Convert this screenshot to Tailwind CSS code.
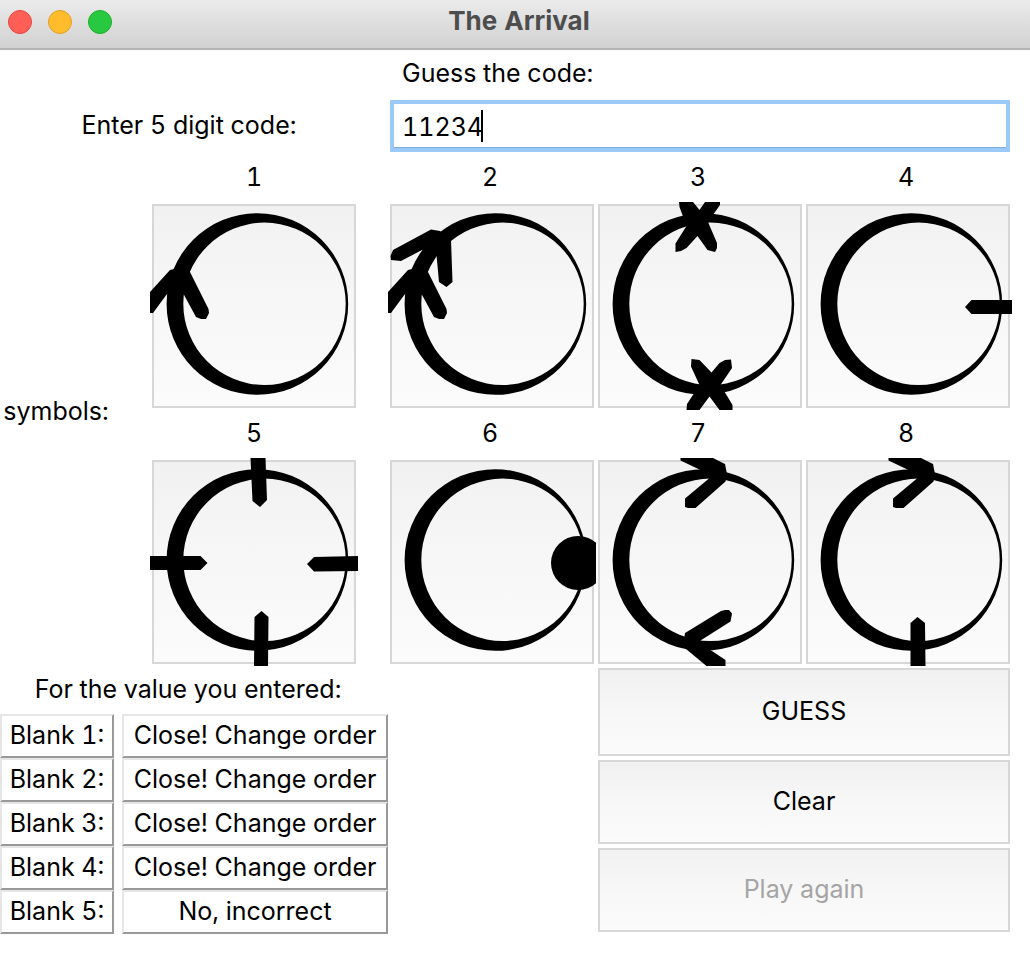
<!DOCTYPE html>
<html lang="en">
<head>
<meta charset="utf-8">
<title>The Arrival</title>
<script src="https://cdn.jsdelivr.net/npm/@tailwindcss/browser@4"></script>
</head>
<body class="bg-white text-black font-['Inter','Liberation_Sans',sans-serif] text-[25px] leading-8 tabular-nums">

<svg class="hidden" aria-hidden="true">
  <defs>
    <path id="ring" fill-rule="evenodd" d="M16.6 102a90.8 90.8 0 1 1 181.6 0a90.8 90.8 0 1 1 -181.6 0ZM33.3 101.8a81.2 81.2 0 1 0 162.4 0a81.2 81.2 0 1 0 -162.4 0Z"/>
    <path id="arrow-left" d="M0 90L20 68L24 67L28 60L40 66V70L58.5 107L59 111L56 117L51 117L46 115L33 91L17 92L3 111H0Z"/>
    <path id="arrow-top" d="M84.5 0H117L129 6L131 16L129.5 23.5L99.5 50H92L89 49V40.5L113 20.5L104.5 12L84.5 2.5Z"/>
  </defs>
</svg>

<header class="relative flex h-[50px] items-center justify-center border-b-2 border-[#b4b4b4] bg-linear-to-b from-[#ebebeb] to-[#d1d1d1] pb-1.5 pl-2">
  <div class="absolute left-2 top-2.5 flex gap-4">
    <button aria-label="Close" class="size-6 rounded-full border border-[#e2463f] bg-[#ff5f57]"></button>
    <button aria-label="Minimize" class="size-6 rounded-full border border-[#dfa023] bg-[#ffbd2e]"></button>
    <button aria-label="Zoom" class="size-6 rounded-full border border-[#1dad2b] bg-[#28c940]"></button>
  </div>
  <h1 class="text-[26px] font-bold text-[#4d4d4d]">The Arrival</h1>
</header>

<main class="pr-[18px]">
  <div class="grid grid-cols-[388fr_624fr] items-center">
    <p class="col-start-2 pl-3.5 pt-[7px] pb-[11px]">Guess the code:</p>
    <label for="code" class="pr-2.5 pb-0.5 text-center">Enter 5 digit code:</label>
    <div class="relative mx-0.5">
      <input id="code" type="text" value="11234" class="block h-[52px] w-full border-4 border-[#9bc9fa] bg-white px-2 pt-0.5 caret-transparent shadow-[inset_0_-1px_0_#7faedd] outline-none">
      <span class="absolute left-[91px] top-2.5 h-8 w-0.5 bg-black"></span>
    </div>
  </div>

  <section class="grid grid-cols-[120fr_268fr_208fr_208fr_208fr] justify-items-center pt-[9px]">
    <h2 class="row-span-2 self-center pr-2 pb-1">symbols:</h2>

    <div class="flex flex-col items-center gap-[11px] pb-[9px]">
      <span>1</span>
      <button aria-label="Symbol 1" class="flex size-[204px] items-center justify-center border-2 border-[#d7d7d7] bg-linear-to-b from-[#f1f1f1] via-[#f7f7f7] to-[#fbfbfb]">
        <svg class="size-[208px] shrink-0" viewBox="0 0 208 208"><use href="#ring"/><use href="#arrow-left"/></svg>
      </button>
    </div>
    <div class="flex flex-col items-center gap-[11px] pb-[9px]">
      <span class="pr-1">2</span>
      <button aria-label="Symbol 2" class="flex size-[204px] items-center justify-center border-2 border-[#d7d7d7] bg-linear-to-b from-[#f1f1f1] via-[#f7f7f7] to-[#fbfbfb]">
        <svg class="size-[208px] shrink-0" viewBox="0 0 208 208"><use href="#ring"/><use href="#arrow-left"/><path d="M2.5 54L5 48L43 27.5L52 29L63 38L64.500 80L58.5 85L51 80L48.5 53L34 48L13 59L3 58Z"/></svg>
      </button>
    </div>
    <div class="flex flex-col items-center gap-[11px] pb-[9px]">
      <span class="pr-1">3</span>
      <button aria-label="Symbol 3" class="flex size-[204px] items-center justify-center border-2 border-[#d7d7d7] bg-linear-to-b from-[#f1f1f1] via-[#f7f7f7] to-[#fbfbfb]">
        <svg class="size-[208px] shrink-0" viewBox="0 0 208 208"><use href="#ring"/><path d="M83 0H97L103.500 8L109 0H124V3L112 20L121 41L121 46L119 50L111.500 48L101.500 34L90.500 46L85 49L79.500 50V41.500L90.500 24L83.500 5Z"/><path d="M95.500 157L103.500 158L115.500 170.500L123.500 161L129 158L135 157.500L136 166L124.500 183L136.500 203V208H123.500L113.500 194.500L103.500 208H90.500L91 202L103.500 183L95 164.500Z"/></svg>
      </button>
    </div>
    <div class="flex flex-col items-center gap-[11px] pb-[9px]">
      <span class="pr-1">4</span>
      <button aria-label="Symbol 4" class="flex size-[204px] items-center justify-center border-2 border-[#d7d7d7] bg-linear-to-b from-[#f1f1f1] via-[#f7f7f7] to-[#fbfbfb]">
        <svg class="size-[208px] shrink-0" viewBox="0 0 208 208"><use href="#ring"/><path d="M161 105L167.500 98H208V112H167.500Z"/></svg>
      </button>
    </div>

    <div class="col-start-2 flex flex-col items-center gap-[11px]">
      <span>5</span>
      <button aria-label="Symbol 5" class="flex size-[204px] items-center justify-center border-2 border-[#d7d7d7] bg-linear-to-b from-[#f1f1f1] via-[#f7f7f7] to-[#fbfbfb]">
        <svg class="size-[208px] shrink-0" viewBox="0 0 208 208"><use href="#ring"/><path d="M100.500 0H115.500L117 42L110 49L102.500 43ZM157 106L164 99L208 98V113L164 113.500ZM0 98H50.500L57.500 105L50.500 112L0 112ZM111.500 153L118.500 159L118 208H104L104.500 159Z"/></svg>
      </button>
    </div>
    <div class="flex flex-col items-center gap-[11px]">
      <span class="pr-1">6</span>
      <button aria-label="Symbol 6" class="flex size-[204px] items-center justify-center border-2 border-[#d7d7d7] bg-linear-to-b from-[#f1f1f1] via-[#f7f7f7] to-[#fbfbfb]">
        <svg class="size-[208px] shrink-0" viewBox="0 0 208 208"><use href="#ring"/><circle cx="190" cy="105" r="27"/></svg>
      </button>
    </div>
    <div class="flex flex-col items-center gap-[11px]">
      <span class="pr-1">7</span>
      <button aria-label="Symbol 7" class="flex size-[204px] items-center justify-center border-2 border-[#d7d7d7] bg-linear-to-b from-[#f1f1f1] via-[#f7f7f7] to-[#fbfbfb]">
        <svg class="size-[208px] shrink-0" viewBox="0 0 208 208"><use href="#ring"/><use href="#arrow-top"/><path d="M125 153L129 152H133L136 155.500L134.500 163.500L104.500 182.500L114.500 192L129.500 202V208H110.500L87 188.500L89 175Z"/></svg>
      </button>
    </div>
    <div class="flex flex-col items-center gap-[11px]">
      <span class="pr-1">8</span>
      <button aria-label="Symbol 8" class="flex size-[204px] items-center justify-center border-2 border-[#d7d7d7] bg-linear-to-b from-[#f1f1f1] via-[#f7f7f7] to-[#fbfbfb]">
        <svg class="size-[208px] shrink-0" viewBox="0 0 208 208"><use href="#ring"/><use href="#arrow-top"/><path d="M113.500 159L121 165L121.500 208H106.500V165Z"/></svg>
      </button>
    </div>
  </section>

  <section class="grid grid-cols-[388fr_208fr_416fr] items-start pt-1">
    <table class="block w-full">
      <caption class="block pt-[5px] pb-[9px] pr-3 text-center">For the value you entered:</caption>
      <tbody class="block">
        <tr class="grid grid-cols-[114px_1fr] gap-2 text-center">
          <th scope="row" class="border-2 border-t-[#e6e6e6] border-r-[#999] border-b-[#999] border-l-[#e6e6e6] pt-[3px] pb-[5px] font-normal">Blank 1:</th>
          <td class="border-2 border-t-[#e6e6e6] border-r-[#999] border-b-[#999] border-l-[#e6e6e6] pt-[3px] pb-[5px]">Close! Change order</td>
        </tr>
        <tr class="grid grid-cols-[114px_1fr] gap-2 text-center">
          <th scope="row" class="border-2 border-t-[#e6e6e6] border-r-[#999] border-b-[#999] border-l-[#e6e6e6] pt-[3px] pb-[5px] font-normal">Blank 2:</th>
          <td class="border-2 border-t-[#e6e6e6] border-r-[#999] border-b-[#999] border-l-[#e6e6e6] pt-[3px] pb-[5px]">Close! Change order</td>
        </tr>
        <tr class="grid grid-cols-[114px_1fr] gap-2 text-center">
          <th scope="row" class="border-2 border-t-[#e6e6e6] border-r-[#999] border-b-[#999] border-l-[#e6e6e6] pt-[3px] pb-[5px] font-normal">Blank 3:</th>
          <td class="border-2 border-t-[#e6e6e6] border-r-[#999] border-b-[#999] border-l-[#e6e6e6] pt-[3px] pb-[5px]">Close! Change order</td>
        </tr>
        <tr class="grid grid-cols-[114px_1fr] gap-2 text-center">
          <th scope="row" class="border-2 border-t-[#e6e6e6] border-r-[#999] border-b-[#999] border-l-[#e6e6e6] pt-[3px] pb-[5px] font-normal">Blank 4:</th>
          <td class="border-2 border-t-[#e6e6e6] border-r-[#999] border-b-[#999] border-l-[#e6e6e6] pt-[3px] pb-[5px]">Close! Change order</td>
        </tr>
        <tr class="grid grid-cols-[114px_1fr] gap-2 text-center">
          <th scope="row" class="border-2 border-t-[#e6e6e6] border-r-[#999] border-b-[#999] border-l-[#e6e6e6] pt-[3px] pb-[5px] font-normal">Blank 5:</th>
          <td class="border-2 border-t-[#e6e6e6] border-r-[#999] border-b-[#999] border-l-[#e6e6e6] pt-[3px] pb-[5px]">No, incorrect</td>
        </tr>
      </tbody>
    </table>
    <div class="col-start-3 mx-0.5 flex flex-col gap-1">
      <button class="h-[88px] border-2 border-[#d7d7d7] bg-linear-to-b from-[#f1f1f1] via-[#f7f7f7] to-[#fbfbfb] pb-0.5">GUESS</button>
      <button class="h-[84px] border-2 border-[#d7d7d7] bg-linear-to-b from-[#f1f1f1] via-[#f7f7f7] to-[#fbfbfb] pb-0.5">Clear</button>
      <button disabled class="h-[84px] border-2 border-[#d7d7d7] bg-linear-to-b from-[#f1f1f1] via-[#f7f7f7] to-[#fbfbfb] pb-0.5 text-[#a5a5a5]">Play again</button>
    </div>
  </section>
</main>
</body>
</html>
